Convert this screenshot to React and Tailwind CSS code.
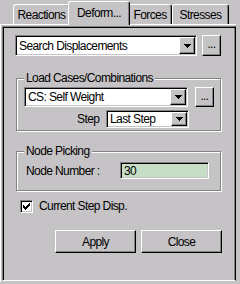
import React from "react";

const raised =
    "border border-t-white border-l-white border-r-black border-b-black shadow-[inset_-1px_-1px_0_#848284]";
const sunken =
    "border border-t-[#848284] border-l-[#848284] border-r-white border-b-white shadow-[inset_1px_1px_0_#000,inset_-1px_-1px_0_#c6c3c6]";

function Tab({ label, active, width }) {
    if (active) {
        return (
            <div
                className={`relative z-10 -mx-[2px] -mb-px flex h-[24px] items-start justify-center rounded-t-[3px] border-l border-t border-r border-l-white border-t-white border-r-black bg-[#c6c3c6] pt-[4px] shadow-[inset_-1px_0_0_#848284] ${width}`}
            >
                {label}
            </div>
        );
    }
    return (
        <div
            className={`flex h-[20px] items-start justify-center rounded-t-[3px] border-l border-t border-r border-l-white border-t-white border-r-black bg-[#c6c3c6] pt-[3px] shadow-[inset_-1px_0_0_#848284] ${width}`}
        >
            {label}
        </div>
    );
}

function Arrow() {
    return (
        <svg width="7" height="4" viewBox="0 0 7 4" shapeRendering="crispEdges">
            <path d="M0 0h7v1H0zM1 1h5v1H1zM2 2h3v1H2zM3 3h1v1H3z" fill="#000" />
        </svg>
    );
}

function Combo({ value, width, height }) {
    return (
        <div className={`flex items-stretch bg-white p-px ${sunken} ${width} ${height}`}>
            <div className="flex flex-1 items-center pl-[2px]">{value}</div>
            <div className={`flex w-[16px] items-center justify-center bg-[#c6c3c6] ${raised}`}>
                <Arrow />
            </div>
        </div>
    );
}

function DotsButton({ height }) {
    return (
        <div className={`flex w-[19px] items-center justify-center bg-[#c6c3c6] pb-[3px] ${raised} ${height}`}>
            ...
        </div>
    );
}

function Group({ label, height, children }) {
    return (
        <div
            className={`relative ml-[13px] w-[205px] border border-[#848284] shadow-[inset_1px_1px_0_#fff,1px_1px_0_#fff] ${height}`}
        >
            <span className="absolute -top-[8px] left-[7px] bg-[#c6c3c6] px-[2px] leading-[14px]">{label}</span>
            {children}
        </div>
    );
}

export default function App() {
    return (
        <div className="h-[284px] w-[240px] overflow-hidden bg-[#c6c3c6] font-['Liberation_Sans',Arial,sans-serif] text-[12px] leading-[14px] tracking-[-0.6px] text-black">
            <div className="flex h-[24px] items-end pl-[13px]">
                <Tab label="Reactions" width="w-[57px]" />
                <Tab label="Deform..." width="w-[62px]" active />
                <Tab label="Forces" width="w-[44px]" />
                <Tab label="Stresses" width="w-[57px]" />
            </div>
            <div className="h-[258px] w-[236px] border-l border-t border-white">
                <div className="ml-px mt-px h-[255px] w-[234px] border border-t-[#848284] border-l-[#848284] border-r-black border-b-white shadow-[inset_1px_1px_0_#000,inset_-1px_0_0_#848284]">
                    <div className="ml-[12px] mt-[8px] flex gap-[5px]">
                        <Combo value="Search Displacements" width="w-[182px]" height="h-[21px]" />
                        <DotsButton height="h-[21px]" />
                    </div>

                    <div className="mt-[22px]">
                        <Group label="Load Cases/Combinations" height="h-[53px]">
                            <div className="ml-[7px] mt-[8px] flex gap-[7px]">
                                <Combo value="CS: Self Weight" width="w-[164px]" height="h-[20px]" />
                                <DotsButton height="h-[20px]" />
                            </div>
                            <div className="mt-[3px] flex items-center">
                                <span className="ml-[60px] w-[29px]">Step</span>
                                <Combo value="Last Step" width="w-[83px]" height="h-[18px]" />
                            </div>
                        </Group>
                    </div>

                    <div className="mt-[20px]">
                        <Group label="Node Picking" height="h-[40px]">
                            <div className="mt-[10px] flex items-center">
                                <span className="ml-[9px] w-[94px]">Node Number :</span>
                                <div className={`flex h-[17px] w-[89px] items-center bg-[#c6dfc6] p-px pl-[3px] ${sunken}`}>
                                    30
                                </div>
                            </div>
                        </Group>
                    </div>

                    <div className="ml-[17px] mt-[8px] flex items-center gap-[6px]">
                        <div className={`flex h-[13px] w-[13px] items-center justify-center bg-white ${sunken}`}>
                            <svg width="7" height="7" viewBox="0 0 7 7" shapeRendering="crispEdges">
                                <path
                                    d="M6 0h1v1H6zM5 1h2v1H5zM0 2h1v1H0zM4 2h3v1H4zM0 3h2v1H0zM3 3h3v1H3zM0 4h5v1H0zM1 5h3v1H1zM2 6h1v1H2z"
                                    fill="#000"
                                />
                            </svg>
                        </div>
                        <span>Current Step Disp.</span>
                    </div>

                    <div className="ml-[52px] mt-[17px] flex gap-[5px]">
                        <div className={`flex h-[23px] w-[81px] items-center justify-center bg-[#c6c3c6] ${raised}`}>
                            Apply
                        </div>
                        <div className={`flex h-[23px] w-[81px] items-center justify-center bg-[#c6c3c6] ${raised}`}>
                            Close
                        </div>
                    </div>
                </div>
            </div>
        </div>
    );
}
